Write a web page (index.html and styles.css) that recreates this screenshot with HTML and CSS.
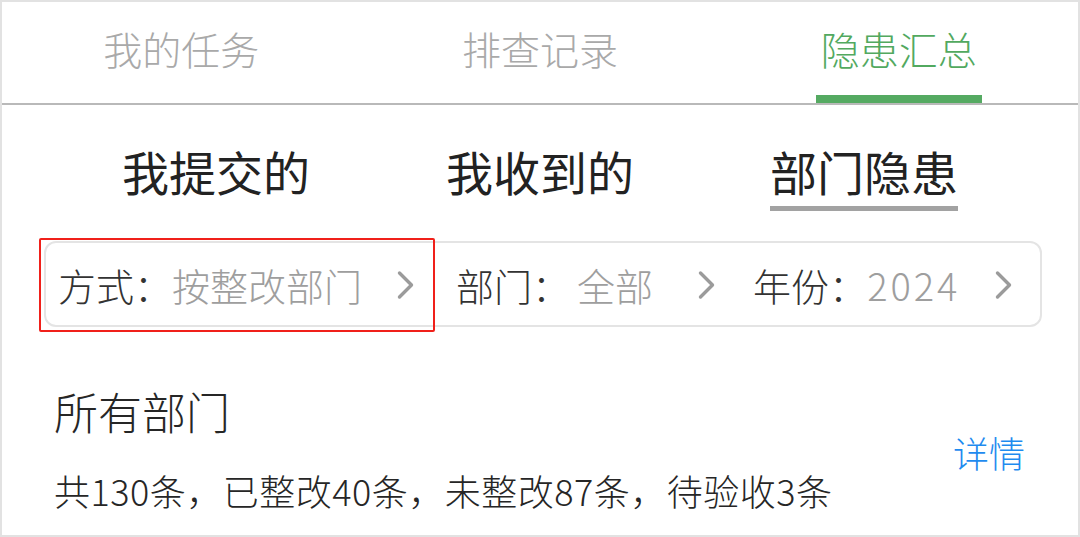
FILE: index.html
```html
<!DOCTYPE html>
<html lang="zh-CN">
<head>
<meta charset="utf-8">
<title>隐患汇总</title>
<link rel="stylesheet" href="styles.css">
</head>
<body>
<div class="page">
  <nav class="tabs">
    <div class="tab"><span class="tab-text">我的任务</span></div>
    <div class="tab"><span class="tab-text">排查记录</span></div>
    <div class="tab tab--active"><span class="tab-text">隐患汇总</span><span class="tab-indicator"></span></div>
  </nav>

  <div class="subtabs">
    <div class="subtab"><span class="subtab-text">我提交的</span></div>
    <div class="subtab"><span class="subtab-text">我收到的</span></div>
    <div class="subtab subtab--active"><span class="subtab-text">部门隐患</span></div>
  </div>

  <div class="filter">
    <div class="filter-item filter-item--mode">
      <span class="filter-label">方式<span class="colon">：</span></span><span class="filter-value">按整改部门</span>
      <svg class="chevron" width="17" height="30" viewBox="0 0 17 30"><polyline points="2.5,3 14.5,15 2.5,27" fill="none" stroke="#9b9b9b" stroke-width="3.4" stroke-linecap="round" stroke-linejoin="round"/></svg>
    </div>
    <div class="filter-item filter-item--dept">
      <span class="filter-label">部门<span class="colon">：</span></span><span class="filter-value">全部</span>
      <svg class="chevron" width="17" height="30" viewBox="0 0 17 30"><polyline points="2.5,3 14.5,15 2.5,27" fill="none" stroke="#9b9b9b" stroke-width="3.4" stroke-linecap="round" stroke-linejoin="round"/></svg>
    </div>
    <div class="filter-item filter-item--year">
      <span class="filter-label">年份<span class="colon">：</span></span><span class="filter-value filter-value--num">2024</span>
      <svg class="chevron" width="17" height="30" viewBox="0 0 17 30"><polyline points="2.5,3 14.5,15 2.5,27" fill="none" stroke="#9b9b9b" stroke-width="3.4" stroke-linecap="round" stroke-linejoin="round"/></svg>
    </div>
    <div class="highlight-box"></div>
  </div>

  <section class="summary">
    <div class="summary-main">
      <div class="summary-title">所有部门</div>
      <div class="summary-text">共130条，已整改40条，未整改87条，待验收3条</div>
    </div>
    <a class="summary-link">详情</a>
  </section>
</div>
</body>
</html>
```

FILE: styles.css
```css
* { box-sizing: border-box; }

html, body {
  margin: 0;
  padding: 0;
  background: #ffffff;
}

body {
  font-family: "Noto Sans CJK SC", "Noto Sans", sans-serif;
  font-weight: 300;
}

.page {
  width: 1080px;
  height: 537px;
  border: 2px solid #e2e2e2;
  background: #ffffff;
  overflow: hidden;
}

/* top tabs */
.tabs {
  display: grid;
  grid-template-columns: 1fr 1fr 1fr;
  height: 103px;
  border-bottom: 2px solid #b9b9b9;
}

.tab {
  display: flex;
  flex-direction: column;
  align-items: center;
  padding-top: 27px;
}

.tab-text {
  font-size: 39px;
  line-height: 1;
  color: #a9a9a9;
  white-space: nowrap;
}

.tab--active .tab-text {
  color: #52a95f;
}

.tab-indicator {
  margin-top: auto;
  width: 166px;
  height: 8px;
  background: #55aa62;
}

/* sub tabs */
.subtabs {
  display: grid;
  grid-template-columns: 1fr 1fr 1fr;
  padding: 0 52px;
  margin-top: 42px;
}

.subtab {
  display: flex;
  justify-content: center;
}

.subtab-text {
  font-size: 47px;
  line-height: 1;
  font-weight: 400;
  color: #222222;
  white-space: nowrap;
  padding-bottom: 12px;
  border-bottom: 5px solid transparent;
}

.subtab--active .subtab-text {
  border-bottom-color: #a2a2a2;
}

/* filter bar */
.filter {
  position: relative;
  display: flex;
  align-items: center;
  height: 86px;
  margin: 30px 36px 0 42px;
  padding: 2px 0 0 12px;
  border: 2px solid #e4e4e4;
  border-radius: 12px;
}

.filter-item {
  display: flex;
  flex: none;
  align-items: center;
  margin-right: 42px;
  white-space: nowrap;
}

.filter-item--dept {
  margin-right: 38px;
}

.filter-label {
  font-size: 38px;
  line-height: 1;
  color: #333333;
}

.colon {
  font-family: "Noto Sans CJK JP", "Noto Sans CJK SC", sans-serif;
}

.filter-value {
  font-size: 38px;
  line-height: 1;
  color: #9e9e9e;
  margin-right: 35px;
}

.filter-item--dept .filter-value {
  margin-left: 7px;
  margin-right: 45px;
}

.filter-value--num {
  letter-spacing: 3px;
}

.chevron {
  display: block;
  flex: none;
}

.highlight-box {
  position: absolute;
  left: -7px;
  top: -5px;
  width: 396px;
  height: 94px;
  border: 2px solid #f0201a;
  border-radius: 2px;
  pointer-events: none;
}

/* summary */
.summary {
  display: flex;
  align-items: center;
  justify-content: space-between;
  margin-top: 62px;
  padding: 0 53px 0 52px;
}

.summary-title {
  font-size: 44px;
  line-height: 1;
  color: #262626;
  white-space: nowrap;
}

.summary-text {
  margin-top: 39px;
  font-size: 36px;
  line-height: 1;
  letter-spacing: 0.5px;
  color: #262626;
  white-space: nowrap;
}

.summary-link {
  font-size: 36px;
  line-height: 1;
  color: #1f8bef;
  margin-top: 6px;
  white-space: nowrap;
}
```
